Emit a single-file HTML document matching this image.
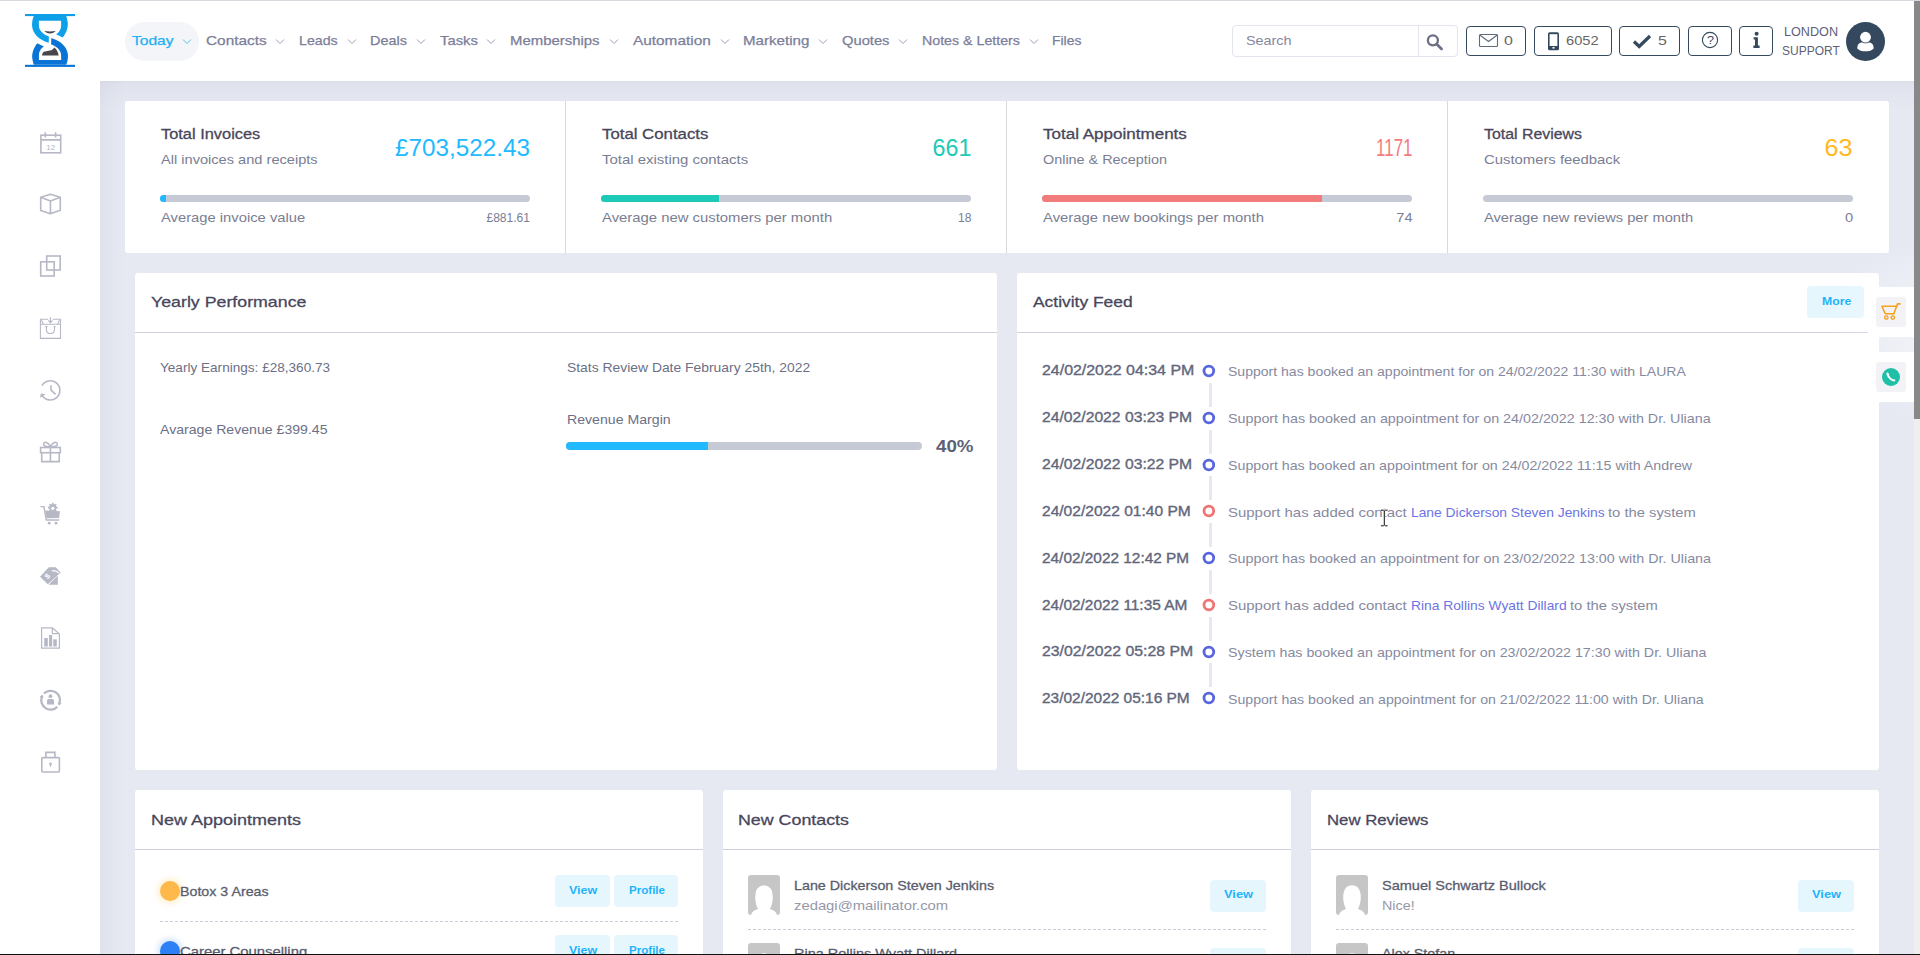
<!DOCTYPE html>
<html><head><meta charset="utf-8"><title>Dashboard</title>
<style>
html,body{margin:0;padding:0;width:1920px;height:955px;overflow:hidden;background:#fff;font-family:"Liberation Sans",sans-serif;}
body{position:relative;}
a{color:inherit;text-decoration:none}
</style></head><body>
<div style="position:absolute;left:0px;top:0px;width:1920px;height:1px;background:#d9dadf"></div>
<div style="position:absolute;left:100px;top:81px;width:1814px;height:873px;background:#e6e9f2"></div>
<div style="position:absolute;left:100px;top:81px;width:1814px;height:30px;background:linear-gradient(to bottom, rgba(30,40,90,0.055) 0, rgba(30,40,90,0.03) 3px, rgba(30,40,90,0.012) 20px, rgba(30,40,90,0) 30px)"></div>
<div style="position:absolute;left:100px;top:81px;width:30px;height:873px;background:linear-gradient(to right, rgba(30,40,90,0.03) 0, rgba(30,40,90,0) 25px)"></div>
<div style="position:absolute;left:1914px;top:1px;width:6px;height:953px;background:#efefef"></div>
<div style="position:absolute;left:1914px;top:1px;width:6px;height:418px;background:#888"></div>
<div style="position:absolute;left:0px;top:954px;width:1920px;height:1px;background:#111"></div>
<svg style="position:absolute;left:0;top:0" width="100" height="80" viewBox="0 0 100 80">
<rect x="25" y="14" width="50" height="2.1" fill="#0e9fe9"/>
<rect x="25" y="64.8" width="50" height="2.1" fill="#0a74d6"/>
<path d="M33.8 16 C32.3 19 31.7 24 32.2 27 C33 33 38 39.5 48.7 42.8 L48.9 36.4 C44 35 40 31.5 39 27 L38.8 20.7 L61.1 20.7 L61.1 25.7 C61 29.5 59 32.5 56.1 34.2 L62.7 37.6 C66.5 33 68.3 27 67.7 22.6 C67.4 20 66.8 18 66.2 16 Z" fill="#0e9fe9"/>
<path d="M33.8 16 C32.3 19 31.7 24 32.2 27 C33 33 38 39.5 48.7 42.8 L48.9 36.4 C44 35 40 31.5 39 27 L38.8 20.7 L61.1 20.7 L61.1 25.7 C61 29.5 59 32.5 56.1 34.2 L62.7 37.6 C66.5 33 68.3 27 67.7 22.6 C67.4 20 66.8 18 66.2 16 Z" fill="#0a74d6" transform="rotate(180 50 40.4)"/>
<path d="M44.2 31 Q50 31.8 55.8 31 Q53 33.6 50 33.6 Q47 33.6 44.2 31 Z" fill="#47474b"/>
<path d="M42 55.4 Q42.5 51.8 45.1 51.5 Q49 50.6 51.4 50.2 Q53.5 49.5 54.2 47.6 Q57.5 49.5 58.6 55.4 Z" fill="#47474b"/>
</svg>
<div style="position:absolute;left:125px;top:22px;width:74px;height:39px;background:#f4f5f9;border-radius:20px"></div>
<svg style="position:absolute;left:182.0px;top:38px" width="10" height="7" viewBox="0 0 10 7"><path d="M1 1.5 L5 5.5 L9 1.5" fill="none" stroke="#1fb0f5" stroke-width="0.9" opacity="0.85"/></svg>
<svg style="position:absolute;left:275.0px;top:38px" width="10" height="7" viewBox="0 0 10 7"><path d="M1 1.5 L5 5.5 L9 1.5" fill="none" stroke="#7b7e9a" stroke-width="0.9" opacity="0.85"/></svg>
<svg style="position:absolute;left:346.8px;top:38px" width="10" height="7" viewBox="0 0 10 7"><path d="M1 1.5 L5 5.5 L9 1.5" fill="none" stroke="#7b7e9a" stroke-width="0.9" opacity="0.85"/></svg>
<svg style="position:absolute;left:415.9px;top:38px" width="10" height="7" viewBox="0 0 10 7"><path d="M1 1.5 L5 5.5 L9 1.5" fill="none" stroke="#7b7e9a" stroke-width="0.9" opacity="0.85"/></svg>
<svg style="position:absolute;left:485.9px;top:38px" width="10" height="7" viewBox="0 0 10 7"><path d="M1 1.5 L5 5.5 L9 1.5" fill="none" stroke="#7b7e9a" stroke-width="0.9" opacity="0.85"/></svg>
<svg style="position:absolute;left:608.5px;top:38px" width="10" height="7" viewBox="0 0 10 7"><path d="M1 1.5 L5 5.5 L9 1.5" fill="none" stroke="#7b7e9a" stroke-width="0.9" opacity="0.85"/></svg>
<svg style="position:absolute;left:719.5px;top:38px" width="10" height="7" viewBox="0 0 10 7"><path d="M1 1.5 L5 5.5 L9 1.5" fill="none" stroke="#7b7e9a" stroke-width="0.9" opacity="0.85"/></svg>
<svg style="position:absolute;left:818.2px;top:38px" width="10" height="7" viewBox="0 0 10 7"><path d="M1 1.5 L5 5.5 L9 1.5" fill="none" stroke="#7b7e9a" stroke-width="0.9" opacity="0.85"/></svg>
<svg style="position:absolute;left:898.1px;top:38px" width="10" height="7" viewBox="0 0 10 7"><path d="M1 1.5 L5 5.5 L9 1.5" fill="none" stroke="#7b7e9a" stroke-width="0.9" opacity="0.85"/></svg>
<svg style="position:absolute;left:1029.0px;top:38px" width="10" height="7" viewBox="0 0 10 7"><path d="M1 1.5 L5 5.5 L9 1.5" fill="none" stroke="#7b7e9a" stroke-width="0.9" opacity="0.85"/></svg>
<div style="position:absolute;left:1232px;top:25px;width:224px;height:30px;border:1px solid #e2e5ee;border-radius:4px;background:#fff"></div>
<div style="position:absolute;left:1418px;top:26px;width:1px;height:30px;background:#e2e5ee"></div>
<svg style="position:absolute;left:1426px;top:33px" width="18" height="18" viewBox="0 0 18 18"><circle cx="6.9" cy="7.3" r="5" fill="none" stroke="#6b6f86" stroke-width="2.3"/><path d="M10.6 11 L15.6 16" stroke="#6b6f86" stroke-width="2.6" stroke-linecap="round"/></svg>
<div style="position:absolute;left:1466px;top:26px;width:60px;height:30px;border:1.5px solid #34495e;border-radius:4px;box-sizing:border-box;background:#fff"></div>
<div style="position:absolute;left:1534px;top:26px;width:78px;height:30px;border:1.5px solid #34495e;border-radius:4px;box-sizing:border-box;background:#fff"></div>
<div style="position:absolute;left:1619px;top:26px;width:61px;height:30px;border:1.5px solid #34495e;border-radius:4px;box-sizing:border-box;background:#fff"></div>
<div style="position:absolute;left:1688px;top:26px;width:44px;height:30px;border:1.5px solid #34495e;border-radius:4px;box-sizing:border-box;background:#fff"></div>
<div style="position:absolute;left:1739px;top:26px;width:34px;height:30px;border:1.5px solid #34495e;border-radius:4px;box-sizing:border-box;background:#fff"></div>
<svg style="position:absolute;left:1478px;top:33px" width="21" height="15" viewBox="0 0 21 15"><rect x="1.5" y="1.5" width="18" height="12" rx="1" fill="none" stroke="#5d6b7a" stroke-width="1.1"/><path d="M1.8 2 L10.5 8.5 L19.2 2" fill="none" stroke="#5d6b7a" stroke-width="1.1"/></svg>
<svg style="position:absolute;left:1547px;top:32px" width="13" height="19" viewBox="0 0 13 19"><rect x="1" y="0.3" width="11" height="18" rx="1.6" fill="#34495e"/><rect x="2.6" y="2.2" width="7.8" height="11.8" fill="#fff"/><rect x="5.5" y="15" width="2" height="1.6" fill="#fff"/></svg>
<svg style="position:absolute;left:1632px;top:34px" width="20" height="15" viewBox="0 0 20 15"><path d="M2 7.5 L7.2 12.5 L18 2" fill="none" stroke="#34495e" stroke-width="3.2" stroke-linejoin="miter"/></svg>
<svg style="position:absolute;left:1700px;top:31px" width="20" height="18" viewBox="0 0 20 18"><circle cx="10" cy="9" r="7.6" fill="none" stroke="#34495e" stroke-width="1.1"/></svg>
<svg style="position:absolute;left:1752px;top:31px" width="9" height="18" viewBox="0 0 9 18"><circle cx="4.6" cy="2.8" r="2" fill="#34495e"/><path d="M1.6 6.3 H5.9 V14.6 H7.6 V17 H1.4 V14.6 H3 V8.6 H1.6 Z" fill="#34495e"/></svg>
<div style="position:absolute;left:1846px;top:22px;width:39px;height:39px;background:#34495e;border-radius:50%"></div>
<svg style="position:absolute;left:1846px;top:22px" width="39" height="39" viewBox="0 0 39 39"><circle cx="19.5" cy="15.2" r="5.4" fill="#fff"/><path d="M11.3 26.5 C11.3 21.5 14 20.6 16 20.4 C17.5 21.4 21.5 21.4 23 20.4 C25 20.6 27.7 21.5 27.7 26.5 C26 28.5 23 29.3 19.5 29.3 C16 29.3 13 28.5 11.3 26.5 Z" fill="#fff"/></svg>
<svg style="position:absolute;left:36px;top:127px" width="30" height="30" viewBox="0 0 30 30"><rect x="4.9" y="8.2" width="19.8" height="17.6" fill="none" stroke="#b6b8c5" stroke-width="1.6"/><path d="M4.9 12.9 H24.7 M9.3 5.2 V10.6 M19.6 5.2 V10.6" stroke="#b6b8c5" stroke-width="1.6"/><text x="14.8" y="22.6" font-size="8" text-anchor="middle" fill="#b6b8c5" font-family="Liberation Sans">12</text></svg>
<svg style="position:absolute;left:36px;top:189px" width="30" height="30" viewBox="0 0 30 30"><path d="M14.45 5.2 L24.3 8.3 V21.2 L14.3 24.8 L4.7 21.4 V8.2 Z M4.7 8.2 L14.45 12.1 L24.3 8.3 M14.45 12.1 V24.6" fill="none" stroke="#b6b8c5" stroke-width="1.6" stroke-linejoin="round"/></svg>
<svg style="position:absolute;left:36px;top:251px" width="30" height="30" viewBox="0 0 30 30"><rect x="10.7" y="5" width="13.5" height="14" fill="none" stroke="#b6b8c5" stroke-width="1.6"/><rect x="4.7" y="10.8" width="13.5" height="14.2" fill="none" stroke="#b6b8c5" stroke-width="1.6"/></svg>
<svg style="position:absolute;left:36px;top:313px" width="30" height="30" viewBox="0 0 30 30"><path d="M12.2 6.3 H4.4 V25.4 H24.5 V6.3 H16.8 M4.4 11.3 H24.5 M14.45 4.2 V9.6 M12.4 7.5 L14.45 9.6 L16.5 7.5 M5.5 7.2 L7.2 10.8 M23.4 7.2 L21.7 10.8 M10.4 13.6 V16.5 Q10.4 20.5 14.45 20.5 Q18.5 20.5 18.5 16.5 V13.6 M9.3 13.6 H11.4 M17.5 13.6 H19.6" fill="none" stroke="#b6b8c5" stroke-width="1.1"/></svg>
<svg style="position:absolute;left:36px;top:375px" width="30" height="30" viewBox="0 0 30 30"><path d="M6 10.5 A9.6 9.6 0 1 1 6.2 20.6" fill="none" stroke="#b6b8c5" stroke-width="1.6"/><path d="M3.8 22.8 L5 18.3 L9.6 19.6 Z" fill="#b6b8c5"/><path d="M15 10.2 V15.2 L19.6 19.3" fill="none" stroke="#b6b8c5" stroke-width="1.6"/></svg>
<svg style="position:absolute;left:36px;top:437px" width="30" height="30" viewBox="0 0 30 30"><rect x="4.6" y="10.5" width="19.7" height="5.2" fill="none" stroke="#b6b8c5" stroke-width="1.6"/><path d="M5.7 15.7 V24.6 H23.2 V15.7 M14.45 10.5 V24.6" fill="none" stroke="#b6b8c5" stroke-width="1.6"/><path d="M14.45 9.6 C12 5 8.3 4.2 7.6 6.8 C7 8.8 9 9.8 14.45 9.6 C20 9.8 22 8.8 21.3 6.8 C20.6 4.2 17 5 14.45 9.6 Z" fill="none" stroke="#b6b8c5" stroke-width="1.5"/></svg>
<svg style="position:absolute;left:36px;top:499px" width="30" height="30" viewBox="0 0 30 30"><path d="M5 7.6 H7.9 L10.3 21 H22.6" fill="none" stroke="#b6b8c5" stroke-width="1.4" stroke-linecap="round"/><path d="M9.3 11.6 L24 12.2 L23 18.9 L10.5 19.2 Z" fill="#b6b8c5"/><circle cx="13.2" cy="24.2" r="1.4" fill="#b6b8c5"/><circle cx="20" cy="24.2" r="1.4" fill="#b6b8c5"/><circle cx="16.8" cy="8.6" r="3.6" fill="#b6b8c5"/><path d="M16.8 3.8 V13.4 M12 8.6 H21.6 M13.4 5.2 L20.2 12 M20.2 5.2 L13.4 12" stroke="#b6b8c5" stroke-width="1.6"/><circle cx="16.8" cy="9.3" r="1.6" fill="#fff"/></svg>
<svg style="position:absolute;left:36px;top:561px" width="30" height="30" viewBox="0 0 30 30"><path d="M4 15.8 L12.8 6.3 H19.8 L24.6 11.4 L11.8 23.2 Z" fill="#b6b8c5"/><path d="M12.6 23.8 L21.8 14.6 V23.8 Z" fill="#b6b8c5"/><path d="M15.8 9.8 Q19 9.2 22.8 11.8" fill="none" stroke="#fff" stroke-width="1.2"/><text x="11.7" y="17.8" font-size="7.5" font-weight="700" fill="#fff" font-family="Liberation Sans" transform="rotate(-45 11.7 15.5)" text-anchor="middle">$</text></svg>
<svg style="position:absolute;left:36px;top:623px" width="30" height="30" viewBox="0 0 30 30"><path d="M5.6 4.8 H16.3 L23.4 11 V25.2 H5.6 Z M16.3 4.8 V10.6 H23.4" fill="none" stroke="#b6b8c5" stroke-width="1.2" stroke-linejoin="round"/><rect x="8.2" y="15" width="3.6" height="8.5" fill="#b6b8c5"/><rect x="13" y="12" width="3.2" height="11.5" fill="#b6b8c5"/><rect x="17.3" y="16.3" width="3.5" height="7.2" fill="#b6b8c5"/></svg>
<svg style="position:absolute;left:36px;top:685px" width="30" height="30" viewBox="0 0 30 30"><path d="M7.95 8.55 A9.4 9.4 0 0 1 23.43 18.41" fill="none" stroke="#b6b8c5" stroke-width="2.2"/><path d="M21.25 21.85 A9.4 9.4 0 0 1 5.77 11.99" fill="none" stroke="#b6b8c5" stroke-width="2.2"/><path d="M6.52 9.6 L7.6 13.2 L3.6 11.7 Z" fill="#b6b8c5"/><path d="M22.68 20.8 L25.6 18.6 L21.6 17.2 Z" fill="#b6b8c5"/><circle cx="14.5" cy="11.2" r="1.9" fill="#b6b8c5"/><path d="M11 19.5 V15.5 Q11 14 12.5 14 H16.5 Q18 14 18 15.5 V19.5 Z" fill="#b6b8c5"/></svg>
<svg style="position:absolute;left:36px;top:747px" width="30" height="30" viewBox="0 0 30 30"><path d="M9.9 10.6 V5.4 H18.9 V10.6" fill="none" stroke="#b6b8c5" stroke-width="1.6"/><rect x="5.8" y="10.6" width="17.6" height="14.4" rx="1" fill="none" stroke="#b6b8c5" stroke-width="1.6"/><circle cx="14.5" cy="16.9" r="1.4" fill="#b6b8c5"/><path d="M14.5 17 V19.8" stroke="#b6b8c5" stroke-width="1.1"/></svg>
<div style="position:absolute;left:125px;top:101px;width:1764px;height:152px;background:#fff;border-radius:3px"></div>
<div style="position:absolute;left:565px;top:101px;width:1px;height:152px;background:#d9d9dc"></div>
<div style="position:absolute;left:1006px;top:101px;width:1px;height:152px;background:#d9d9dc"></div>
<div style="position:absolute;left:1447px;top:101px;width:1px;height:152px;background:#d9d9dc"></div>
<div style="position:absolute;left:160px;top:195px;width:370px;height:7px;background:#c6cad5;border-radius:4px;overflow:hidden"></div>
<div style="position:absolute;left:160px;top:195px;width:6px;height:7px;background:#22b9ff;border-radius:4px 0 0 4px"></div>
<div style="position:absolute;left:601px;top:195px;width:370px;height:7px;background:#c6cad5;border-radius:4px;overflow:hidden"></div>
<div style="position:absolute;left:601px;top:195px;width:117.5px;height:7px;background:#1dc9b7;border-radius:4px 0 0 4px"></div>
<div style="position:absolute;left:1042px;top:195px;width:370px;height:7px;background:#c6cad5;border-radius:4px;overflow:hidden"></div>
<div style="position:absolute;left:1042px;top:195px;width:280px;height:7px;background:#f27c7c;border-radius:4px 0 0 4px"></div>
<div style="position:absolute;left:1483px;top:195px;width:370px;height:7px;background:#c6cad5;border-radius:4px;overflow:hidden"></div>
<div style="position:absolute;left:135px;top:273px;width:862px;height:497px;background:#fff;border-radius:3px"></div>
<div style="position:absolute;left:135px;top:332px;width:862px;height:1px;background:#cdd1dd"></div>
<div style="position:absolute;left:566px;top:442px;width:356px;height:8px;background:#c6cad5;border-radius:4px"></div>
<div style="position:absolute;left:566px;top:442px;width:142px;height:8px;background:#22b9ff;border-radius:4px 0 0 4px"></div>
<div style="position:absolute;left:1017px;top:273px;width:862px;height:497px;background:#fff;border-radius:3px"></div>
<div style="position:absolute;left:1017px;top:332px;width:862px;height:1px;background:#cdd1dd"></div>
<div style="position:absolute;left:1807px;top:286px;width:57px;height:32px;background:#e5f6fd;border-radius:4px"></div>
<svg style="position:absolute;left:1200px;top:362.30px" width="18" height="18" viewBox="0 0 18 18"><circle cx="8.85" cy="9" r="4.85" fill="none" stroke="#5867dd" stroke-width="2.8"/></svg>
<div style="position:absolute;left:1209.3px;top:382.9px;width:2.6px;height:24px;background:#e6e8f3"></div>
<svg style="position:absolute;left:1200px;top:409.03px" width="18" height="18" viewBox="0 0 18 18"><circle cx="8.85" cy="9" r="4.85" fill="none" stroke="#5867dd" stroke-width="2.8"/></svg>
<div style="position:absolute;left:1209.3px;top:429.6px;width:2.6px;height:24px;background:#e6e8f3"></div>
<svg style="position:absolute;left:1200px;top:455.76px" width="18" height="18" viewBox="0 0 18 18"><circle cx="8.85" cy="9" r="4.85" fill="none" stroke="#5867dd" stroke-width="2.8"/></svg>
<div style="position:absolute;left:1209.3px;top:476.4px;width:2.6px;height:24px;background:#e6e8f3"></div>
<svg style="position:absolute;left:1200px;top:502.49px" width="18" height="18" viewBox="0 0 18 18"><circle cx="8.85" cy="9" r="4.85" fill="none" stroke="#f07474" stroke-width="2.8"/></svg>
<div style="position:absolute;left:1209.3px;top:523.1px;width:2.6px;height:24px;background:#e6e8f3"></div>
<svg style="position:absolute;left:1200px;top:549.22px" width="18" height="18" viewBox="0 0 18 18"><circle cx="8.85" cy="9" r="4.85" fill="none" stroke="#5867dd" stroke-width="2.8"/></svg>
<div style="position:absolute;left:1209.3px;top:569.8px;width:2.6px;height:24px;background:#e6e8f3"></div>
<svg style="position:absolute;left:1200px;top:595.95px" width="18" height="18" viewBox="0 0 18 18"><circle cx="8.85" cy="9" r="4.85" fill="none" stroke="#f07474" stroke-width="2.8"/></svg>
<div style="position:absolute;left:1209.3px;top:616.6px;width:2.6px;height:24px;background:#e6e8f3"></div>
<svg style="position:absolute;left:1200px;top:642.68px" width="18" height="18" viewBox="0 0 18 18"><circle cx="8.85" cy="9" r="4.85" fill="none" stroke="#5867dd" stroke-width="2.8"/></svg>
<div style="position:absolute;left:1209.3px;top:663.3px;width:2.6px;height:24px;background:#e6e8f3"></div>
<svg style="position:absolute;left:1200px;top:689.41px" width="18" height="18" viewBox="0 0 18 18"><circle cx="8.85" cy="9" r="4.85" fill="none" stroke="#5867dd" stroke-width="2.8"/></svg>
<div style="position:absolute;left:1800px;top:240px;width:150px;height:200px;background:radial-gradient(ellipse at 90% 45%, rgba(255,255,255,0.5) 0%, rgba(255,255,255,0) 60%)"></div>
<div style="position:absolute;left:1868px;top:287px;width:46px;height:50px;background:#fff;border-radius:4px 0 0 4px"></div>
<div style="position:absolute;left:1876px;top:297px;width:30px;height:30px;background:#f3f3f7;border-radius:3px"></div>
<svg style="position:absolute;left:1880px;top:302px" width="22" height="20" viewBox="0 0 22 20"><path d="M1.9 4.3 H16.6 L13.9 11.8 H5.2 Z" fill="none" stroke="#f7a21b" stroke-width="1.6" stroke-linejoin="round"/><path d="M16.4 4.6 L17.6 1.9 H20" fill="none" stroke="#f7a21b" stroke-width="1.6" stroke-linecap="round"/><circle cx="6.3" cy="15.6" r="1.7" fill="none" stroke="#f7a21b" stroke-width="1.4"/><circle cx="12.8" cy="15.6" r="1.7" fill="none" stroke="#f7a21b" stroke-width="1.4"/></svg>
<div style="position:absolute;left:1868px;top:352px;width:46px;height:50px;background:#fff;border-radius:4px 0 0 4px"></div>
<div style="position:absolute;left:1876px;top:362px;width:30px;height:30px;background:#f3f3f7;border-radius:3px"></div>
<svg style="position:absolute;left:1881px;top:366.5px" width="20" height="20" viewBox="0 0 20 20"><circle cx="10" cy="10" r="9" fill="#1fbfa8"/><path d="M6.2 5.2 C5.4 5.8 5.2 7 5.8 8.3 C6.8 10.6 8.8 12.8 11.3 14 C12.6 14.6 13.8 14.5 14.5 13.7 L13.2 12 C12.7 12.3 12.2 12.4 11.6 12.1 C10.2 11.3 8.9 10 8.1 8.5 C7.8 7.9 7.9 7.4 8.2 6.9 Z" fill="#fff"/></svg>
<div style="position:absolute;left:135px;top:790px;width:568px;height:180px;background:#fff;border-radius:3px"></div>
<div style="position:absolute;left:135px;top:849px;width:568px;height:1px;background:#cdd1dd"></div>
<div style="position:absolute;left:723px;top:790px;width:568px;height:180px;background:#fff;border-radius:3px"></div>
<div style="position:absolute;left:723px;top:849px;width:568px;height:1px;background:#cdd1dd"></div>
<div style="position:absolute;left:1311px;top:790px;width:568px;height:180px;background:#fff;border-radius:3px"></div>
<div style="position:absolute;left:1311px;top:849px;width:568px;height:1px;background:#cdd1dd"></div>
<div style="position:absolute;left:159.8px;top:881.3px;width:20px;height:20px;border-radius:50%;background:#ffb84a;box-shadow:0 0 6px 2px rgba(255,184,34,0.25)"></div>
<div style="position:absolute;left:555px;top:875px;width:55px;height:32px;background:#e5f7fd;border-radius:4px"></div>
<div style="position:absolute;left:614px;top:875px;width:64px;height:32px;background:#e5f7fd;border-radius:4px"></div>
<div style="position:absolute;left:160px;top:921px;width:518px;height:1px;background-image:linear-gradient(to right,#c6cbd6 0,#c6cbd6 3px,transparent 3px);background-size:5px 1px;background-repeat:repeat-x"></div>
<div style="position:absolute;left:159.8px;top:941px;width:20px;height:20px;border-radius:50%;background:#2c82f5;box-shadow:0 0 6px 2px rgba(44,130,245,0.25)"></div>
<div style="position:absolute;left:555px;top:935px;width:55px;height:32px;background:#e5f7fd;border-radius:4px"></div>
<div style="position:absolute;left:614px;top:935px;width:64px;height:32px;background:#e5f7fd;border-radius:4px"></div>
<svg style="position:absolute;left:748px;top:875px" width="32" height="40" viewBox="0 0 32 40"><rect width="32" height="40" rx="3" fill="#c6c6c6"/><path d="M3 40 Q4 35.5 10 34 Q7.8 30 7.3 25 Q6.3 10.8 16 10.3 Q25.7 10.8 24.7 25 Q24.2 30 22 34 Q28 35.5 29 40 Z" fill="#fff"/></svg>
<div style="position:absolute;left:1210px;top:880px;width:56px;height:32px;background:#e5f7fd;border-radius:4px"></div>
<div style="position:absolute;left:748px;top:929px;width:518px;height:1px;background-image:linear-gradient(to right,#c6cbd6 0,#c6cbd6 3px,transparent 3px);background-size:5px 1px;background-repeat:repeat-x"></div>
<svg style="position:absolute;left:748px;top:943px" width="32" height="40" viewBox="0 0 32 40"><rect width="32" height="40" rx="3" fill="#c6c6c6"/><path d="M3 40 Q4 35.5 10 34 Q7.8 30 7.3 25 Q6.3 10.8 16 10.3 Q25.7 10.8 24.7 25 Q24.2 30 22 34 Q28 35.5 29 40 Z" fill="#fff"/></svg>
<div style="position:absolute;left:1210px;top:948px;width:56px;height:32px;background:#e5f7fd;border-radius:4px"></div>
<svg style="position:absolute;left:1336px;top:875px" width="32" height="40" viewBox="0 0 32 40"><rect width="32" height="40" rx="3" fill="#c6c6c6"/><path d="M3 40 Q4 35.5 10 34 Q7.8 30 7.3 25 Q6.3 10.8 16 10.3 Q25.7 10.8 24.7 25 Q24.2 30 22 34 Q28 35.5 29 40 Z" fill="#fff"/></svg>
<div style="position:absolute;left:1798px;top:880px;width:56px;height:32px;background:#e5f7fd;border-radius:4px"></div>
<div style="position:absolute;left:1336px;top:929px;width:518px;height:1px;background-image:linear-gradient(to right,#c6cbd6 0,#c6cbd6 3px,transparent 3px);background-size:5px 1px;background-repeat:repeat-x"></div>
<svg style="position:absolute;left:1336px;top:943px" width="32" height="40" viewBox="0 0 32 40"><rect width="32" height="40" rx="3" fill="#c6c6c6"/><path d="M3 40 Q4 35.5 10 34 Q7.8 30 7.3 25 Q6.3 10.8 16 10.3 Q25.7 10.8 24.7 25 Q24.2 30 22 34 Q28 35.5 29 40 Z" fill="#fff"/></svg>
<div style="position:absolute;left:1798px;top:948px;width:56px;height:32px;background:#e5f7fd;border-radius:4px"></div>
<svg style="position:absolute;left:1380px;top:509px;z-index:6" width="9" height="18" viewBox="0 0 9 18"><path d="M1 1.2 H3.4 L4.3 2 L5.2 1.2 H7.6 M4.3 2 V16 M1 16.8 H3.4 L4.3 16 L5.2 16.8 H7.6" fill="none" stroke="#fff" stroke-width="2"/><path d="M1 1.2 H3.4 L4.3 2 L5.2 1.2 H7.6 M4.3 2 V16 M1 16.8 H3.4 L4.3 16 L5.2 16.8 H7.6" fill="none" stroke="#111" stroke-width="1"/></svg>
<div style="position:absolute;left:0;top:954px;width:1920px;height:1px;background:#111;z-index:5"></div>
<div style="position:absolute;left:1914px;top:1px;width:6px;height:953px;background:#efefef;z-index:5"></div>
<div style="position:absolute;left:1914px;top:1px;width:6px;height:418px;background:#888;z-index:5"></div>
<div style="position:absolute;top:34.1px;font-size:13px;line-height:13px;font-weight:400;color:#1fb0f5;white-space:nowrap;left:131.9px;transform-origin:0 0;transform:scaleX(1.1986);-webkit-text-stroke:0.25px currentColor;">Today</div>
<div style="position:absolute;top:34.1px;font-size:13px;line-height:13px;font-weight:400;color:#7b7e9a;white-space:nowrap;left:205.6px;transform-origin:0 0;transform:scaleX(1.1816);-webkit-text-stroke:0.25px currentColor;">Contacts</div>
<div style="position:absolute;top:34.1px;font-size:13px;line-height:13px;font-weight:400;color:#7b7e9a;white-space:nowrap;left:298.9px;transform-origin:0 0;transform:scaleX(1.0907);-webkit-text-stroke:0.25px currentColor;">Leads</div>
<div style="position:absolute;top:34.1px;font-size:13px;line-height:13px;font-weight:400;color:#7b7e9a;white-space:nowrap;left:370.3px;transform-origin:0 0;transform:scaleX(1.1084);-webkit-text-stroke:0.25px currentColor;">Deals</div>
<div style="position:absolute;top:34.1px;font-size:13px;line-height:13px;font-weight:400;color:#7b7e9a;white-space:nowrap;left:439.5px;transform-origin:0 0;transform:scaleX(1.1415);-webkit-text-stroke:0.25px currentColor;">Tasks</div>
<div style="position:absolute;top:34.1px;font-size:13px;line-height:13px;font-weight:400;color:#7b7e9a;white-space:nowrap;left:509.8px;transform-origin:0 0;transform:scaleX(1.1469);-webkit-text-stroke:0.25px currentColor;">Memberships</div>
<div style="position:absolute;top:34.1px;font-size:13px;line-height:13px;font-weight:400;color:#7b7e9a;white-space:nowrap;left:632.5px;transform-origin:0 0;transform:scaleX(1.1819);-webkit-text-stroke:0.25px currentColor;">Automation</div>
<div style="position:absolute;top:34.1px;font-size:13px;line-height:13px;font-weight:400;color:#7b7e9a;white-space:nowrap;left:743.3px;transform-origin:0 0;transform:scaleX(1.1617);-webkit-text-stroke:0.25px currentColor;">Marketing</div>
<div style="position:absolute;top:34.1px;font-size:13px;line-height:13px;font-weight:400;color:#7b7e9a;white-space:nowrap;left:841.7px;transform-origin:0 0;transform:scaleX(1.1325);-webkit-text-stroke:0.25px currentColor;">Quotes</div>
<div style="position:absolute;top:34.1px;font-size:13px;line-height:13px;font-weight:400;color:#7b7e9a;white-space:nowrap;left:921.7px;transform-origin:0 0;transform:scaleX(1.0929);-webkit-text-stroke:0.25px currentColor;">Notes &amp; Letters</div>
<div style="position:absolute;top:34.1px;font-size:13px;line-height:13px;font-weight:400;color:#7b7e9a;white-space:nowrap;left:1052px;transform-origin:0 0;transform:scaleX(1.0714);-webkit-text-stroke:0.25px currentColor;">Files</div>
<div style="position:absolute;top:34.2px;font-size:13px;line-height:13px;font-weight:400;color:#84879e;white-space:nowrap;left:1246.2px;transform-origin:0 0;transform:scaleX(1.1055);">Search</div>
<div style="position:absolute;top:33.79px;font-size:13.5px;line-height:13.5px;font-weight:400;color:#666;white-space:nowrap;left:1504.4px;transform-origin:0 0;transform:scaleX(1.1809);">0</div>
<div style="position:absolute;top:33.79px;font-size:13.5px;line-height:13.5px;font-weight:400;color:#666;white-space:nowrap;left:1566px;transform-origin:0 0;transform:scaleX(1.0874);">6052</div>
<div style="position:absolute;top:33.79px;font-size:13.5px;line-height:13.5px;font-weight:400;color:#666;white-space:nowrap;left:1658px;transform-origin:0 0;transform:scaleX(1.1809);">5</div>
<div style="position:absolute;top:34.88px;font-size:10.5px;line-height:10.5px;font-weight:400;color:#34495e;white-space:nowrap;left:1706.5px;transform-origin:0 0;transform:scaleX(1.1991);">?</div>
<div style="position:absolute;top:26.23px;font-size:12px;line-height:12px;font-weight:400;color:#5c5f78;white-space:nowrap;left:1783.5px;transform-origin:0 0;transform:scaleX(1.0519);">LONDON</div>
<div style="position:absolute;top:45.13px;font-size:12px;line-height:12px;font-weight:400;color:#5c5f78;white-space:nowrap;left:1781.6px;transform-origin:0 0;transform:scaleX(0.9994);">SUPPORT</div>
<div style="position:absolute;top:127.27px;font-size:14px;line-height:14px;font-weight:400;color:#48465b;white-space:nowrap;left:160.5px;transform-origin:0 0;transform:scaleX(1.1707);-webkit-text-stroke:0.28px currentColor;">Total Invoices</div>
<div style="position:absolute;top:152.95px;font-size:13px;line-height:13px;font-weight:400;color:#7a7e93;white-space:nowrap;left:160.5px;transform-origin:0 0;transform:scaleX(1.1233);">All invoices and receipts</div>
<div style="position:absolute;top:136.7px;font-size:23px;line-height:23px;font-weight:400;color:#22b9ff;white-space:nowrap;right:1390px;transform-origin:100% 0;transform:scaleX(1.0550);">&pound;703,522.43</div>
<div style="position:absolute;top:211.2px;font-size:13px;line-height:13px;font-weight:400;color:#7a7e93;white-space:nowrap;left:160.5px;transform-origin:0 0;transform:scaleX(1.1357);">Average invoice value</div>
<div style="position:absolute;top:211.2px;font-size:13px;line-height:13px;font-weight:400;color:#7a7e93;white-space:nowrap;right:1390px;transform-origin:100% 0;transform:scaleX(0.9269);">&pound;881.61</div>
<div style="position:absolute;top:127.27px;font-size:14px;line-height:14px;font-weight:400;color:#48465b;white-space:nowrap;left:601.5px;transform-origin:0 0;transform:scaleX(1.1986);-webkit-text-stroke:0.28px currentColor;">Total Contacts</div>
<div style="position:absolute;top:152.95px;font-size:13px;line-height:13px;font-weight:400;color:#7a7e93;white-space:nowrap;left:601.5px;transform-origin:0 0;transform:scaleX(1.1494);">Total existing contacts</div>
<div style="position:absolute;top:136.7px;font-size:23px;line-height:23px;font-weight:400;color:#1dc9b7;white-space:nowrap;right:949px;transform-origin:100% 0;transform:scaleX(1.0127);">661</div>
<div style="position:absolute;top:211.2px;font-size:13px;line-height:13px;font-weight:400;color:#7a7e93;white-space:nowrap;left:601.5px;transform-origin:0 0;transform:scaleX(1.1431);">Average new customers per month</div>
<div style="position:absolute;top:211.2px;font-size:13px;line-height:13px;font-weight:400;color:#7a7e93;white-space:nowrap;right:949px;transform-origin:100% 0;transform:scaleX(0.9308);">18</div>
<div style="position:absolute;top:127.27px;font-size:14px;line-height:14px;font-weight:400;color:#48465b;white-space:nowrap;left:1042.5px;transform-origin:0 0;transform:scaleX(1.2161);-webkit-text-stroke:0.28px currentColor;">Total Appointments</div>
<div style="position:absolute;top:152.95px;font-size:13px;line-height:13px;font-weight:400;color:#7a7e93;white-space:nowrap;left:1042.5px;transform-origin:0 0;transform:scaleX(1.1065);">Online &amp; Reception</div>
<div style="position:absolute;top:136.7px;font-size:23px;line-height:23px;font-weight:400;color:#f27c7c;white-space:nowrap;right:508px;transform-origin:100% 0;transform:scaleX(0.7349);">1171</div>
<div style="position:absolute;top:211.2px;font-size:13px;line-height:13px;font-weight:400;color:#7a7e93;white-space:nowrap;left:1042.5px;transform-origin:0 0;transform:scaleX(1.1423);">Average new bookings per month</div>
<div style="position:absolute;top:211.2px;font-size:13px;line-height:13px;font-weight:400;color:#7a7e93;white-space:nowrap;right:508px;transform-origin:100% 0;transform:scaleX(1.1170);">74</div>
<div style="position:absolute;top:127.27px;font-size:14px;line-height:14px;font-weight:400;color:#48465b;white-space:nowrap;left:1483.5px;transform-origin:0 0;transform:scaleX(1.1348);-webkit-text-stroke:0.28px currentColor;">Total Reviews</div>
<div style="position:absolute;top:152.95px;font-size:13px;line-height:13px;font-weight:400;color:#7a7e93;white-space:nowrap;left:1483.5px;transform-origin:0 0;transform:scaleX(1.1422);">Customers feedback</div>
<div style="position:absolute;top:136.7px;font-size:23px;line-height:23px;font-weight:400;color:#ffb822;white-space:nowrap;right:67px;transform-origin:100% 0;transform:scaleX(1.0946);">63</div>
<div style="position:absolute;top:211.2px;font-size:13px;line-height:13px;font-weight:400;color:#7a7e93;white-space:nowrap;left:1483.5px;transform-origin:0 0;transform:scaleX(1.1278);">Average new reviews per month</div>
<div style="position:absolute;top:211.2px;font-size:13px;line-height:13px;font-weight:400;color:#7a7e93;white-space:nowrap;right:67px;transform-origin:100% 0;transform:scaleX(1.1301);">0</div>
<div style="position:absolute;top:294.44px;font-size:15px;line-height:15px;font-weight:400;color:#48465b;white-space:nowrap;left:150.5px;transform-origin:0 0;transform:scaleX(1.1847);-webkit-text-stroke:0.28px currentColor;">Yearly Performance</div>
<div style="position:absolute;top:361.1px;font-size:13px;line-height:13px;font-weight:400;color:#6c7086;white-space:nowrap;left:160.4px;transform-origin:0 0;transform:scaleX(1.0443);">Yearly Earnings: &pound;28,360.73</div>
<div style="position:absolute;top:423.1px;font-size:13px;line-height:13px;font-weight:400;color:#6c7086;white-space:nowrap;left:160.4px;transform-origin:0 0;transform:scaleX(1.0847);">Avarage Revenue &pound;399.45</div>
<div style="position:absolute;top:361.2px;font-size:13px;line-height:13px;font-weight:400;color:#6c7086;white-space:nowrap;left:566.6px;transform-origin:0 0;transform:scaleX(1.0680);">Stats Review Date February 25th, 2022</div>
<div style="position:absolute;top:413.3px;font-size:13px;line-height:13px;font-weight:400;color:#6c7086;white-space:nowrap;left:566.6px;transform-origin:0 0;transform:scaleX(1.0864);">Revenue Margin</div>
<div style="position:absolute;top:437.78px;font-size:17px;line-height:17px;font-weight:700;color:#5d6176;white-space:nowrap;left:935.7px;transform-origin:0 0;transform:scaleX(1.1019);">40%</div>
<div style="position:absolute;top:294.44px;font-size:15px;line-height:15px;font-weight:400;color:#48465b;white-space:nowrap;left:1032.8px;transform-origin:0 0;transform:scaleX(1.1609);-webkit-text-stroke:0.28px currentColor;">Activity Feed</div>
<div style="position:absolute;top:296.35px;font-size:11.5px;line-height:11.5px;font-weight:700;color:#1fb3fb;white-space:nowrap;left:1821.8px;transform-origin:0 0;transform:scaleX(1.0616);">More</div>
<div style="position:absolute;top:362.34px;font-size:15px;line-height:15px;font-weight:400;color:#62667b;white-space:nowrap;left:1042.1px;transform-origin:0 0;transform:scaleX(1.0615);-webkit-text-stroke:0.38px currentColor;">24/02/2022 04:34 PM</div>
<div style="position:absolute;top:365.0px;font-size:13px;line-height:13px;font-weight:400;color:#868aa0;white-space:nowrap;left:1228.3px;transform-origin:0 0;transform:scaleX(1.0798);">Support has booked an appointment for on 24/02/2022 11:30 with LAURA</div>
<div style="position:absolute;top:409.18px;font-size:15px;line-height:15px;font-weight:400;color:#62667b;white-space:nowrap;left:1042.1px;transform-origin:0 0;transform:scaleX(1.0467);-webkit-text-stroke:0.38px currentColor;">24/02/2022 03:23 PM</div>
<div style="position:absolute;top:411.84px;font-size:13px;line-height:13px;font-weight:400;color:#868aa0;white-space:nowrap;left:1228.3px;transform-origin:0 0;transform:scaleX(1.1002);">Support has booked an appointment for on 24/02/2022 12:30 with Dr. Uliana</div>
<div style="position:absolute;top:456.02px;font-size:15px;line-height:15px;font-weight:400;color:#62667b;white-space:nowrap;left:1042.1px;transform-origin:0 0;transform:scaleX(1.0467);-webkit-text-stroke:0.38px currentColor;">24/02/2022 03:22 PM</div>
<div style="position:absolute;top:458.68px;font-size:13px;line-height:13px;font-weight:400;color:#868aa0;white-space:nowrap;left:1228.3px;transform-origin:0 0;transform:scaleX(1.0946);">Support has booked an appointment for on 24/02/2022 11:15 with Andrew</div>
<div style="position:absolute;top:502.86px;font-size:15px;line-height:15px;font-weight:400;color:#62667b;white-space:nowrap;left:1042.1px;transform-origin:0 0;transform:scaleX(1.0369);-webkit-text-stroke:0.38px currentColor;">24/02/2022 01:40 PM</div>
<div style="position:absolute;top:505.52px;font-size:13px;line-height:13px;font-weight:400;color:#868aa0;white-space:nowrap;left:1228.3px;transform-origin:0 0;transform:scaleX(1.1500);">Support has added contact</div>
<div style="position:absolute;top:505.52px;font-size:13px;line-height:13px;font-weight:400;color:#6d73e4;white-space:nowrap;left:1410.8px;transform-origin:0 0;transform:scaleX(1.0631);">Lane Dickerson Steven Jenkins</div>
<div style="position:absolute;top:505.52px;font-size:13px;line-height:13px;font-weight:400;color:#868aa0;white-space:nowrap;left:1608px;transform-origin:0 0;transform:scaleX(1.1367);">to the system</div>
<div style="position:absolute;top:549.7px;font-size:15px;line-height:15px;font-weight:400;color:#62667b;white-space:nowrap;left:1042.1px;transform-origin:0 0;transform:scaleX(1.0256);-webkit-text-stroke:0.38px currentColor;">24/02/2022 12:42 PM</div>
<div style="position:absolute;top:552.36px;font-size:13px;line-height:13px;font-weight:400;color:#868aa0;white-space:nowrap;left:1228.3px;transform-origin:0 0;transform:scaleX(1.1011);">Support has booked an appointment for on 23/02/2022 13:00 with Dr. Uliana</div>
<div style="position:absolute;top:596.54px;font-size:15px;line-height:15px;font-weight:400;color:#62667b;white-space:nowrap;left:1042.1px;transform-origin:0 0;transform:scaleX(1.0270);-webkit-text-stroke:0.38px currentColor;">24/02/2022 11:35 AM</div>
<div style="position:absolute;top:599.2px;font-size:13px;line-height:13px;font-weight:400;color:#868aa0;white-space:nowrap;left:1228.3px;transform-origin:0 0;transform:scaleX(1.1500);">Support has added contact</div>
<div style="position:absolute;top:599.2px;font-size:13px;line-height:13px;font-weight:400;color:#6d73e4;white-space:nowrap;left:1410.8px;transform-origin:0 0;transform:scaleX(1.0618);">Rina Rollins Wyatt Dillard</div>
<div style="position:absolute;top:599.2px;font-size:13px;line-height:13px;font-weight:400;color:#868aa0;white-space:nowrap;left:1570px;transform-origin:0 0;transform:scaleX(1.1367);">to the system</div>
<div style="position:absolute;top:643.38px;font-size:15px;line-height:15px;font-weight:400;color:#62667b;white-space:nowrap;left:1042.1px;transform-origin:0 0;transform:scaleX(1.0538);-webkit-text-stroke:0.38px currentColor;">23/02/2022 05:28 PM</div>
<div style="position:absolute;top:646.04px;font-size:13px;line-height:13px;font-weight:400;color:#868aa0;white-space:nowrap;left:1228.3px;transform-origin:0 0;transform:scaleX(1.0960);">System has booked an appointment for on 23/02/2022 17:30 with Dr. Uliana</div>
<div style="position:absolute;top:690.22px;font-size:15px;line-height:15px;font-weight:400;color:#62667b;white-space:nowrap;left:1042.1px;transform-origin:0 0;transform:scaleX(1.0299);-webkit-text-stroke:0.38px currentColor;">23/02/2022 05:16 PM</div>
<div style="position:absolute;top:692.88px;font-size:13px;line-height:13px;font-weight:400;color:#868aa0;white-space:nowrap;left:1228.3px;transform-origin:0 0;transform:scaleX(1.0868);">Support has booked an appointment for on 21/02/2022 11:00 with Dr. Uliana</div>
<div style="position:absolute;top:812.44px;font-size:15px;line-height:15px;font-weight:400;color:#48465b;white-space:nowrap;left:150.8px;transform-origin:0 0;transform:scaleX(1.1996);-webkit-text-stroke:0.28px currentColor;">New Appointments</div>
<div style="position:absolute;top:812.44px;font-size:15px;line-height:15px;font-weight:400;color:#48465b;white-space:nowrap;left:738px;transform-origin:0 0;transform:scaleX(1.1880);-webkit-text-stroke:0.28px currentColor;">New Contacts</div>
<div style="position:absolute;top:812.44px;font-size:15px;line-height:15px;font-weight:400;color:#48465b;white-space:nowrap;left:1326.5px;transform-origin:0 0;transform:scaleX(1.1164);-webkit-text-stroke:0.28px currentColor;">New Reviews</div>
<div style="position:absolute;top:885.1px;font-size:13px;line-height:13px;font-weight:400;color:#595d6e;white-space:nowrap;left:180px;transform-origin:0 0;transform:scaleX(1.0949);-webkit-text-stroke:0.28px currentColor;">Botox 3 Areas</div>
<div style="position:absolute;top:885.35px;font-size:11.5px;line-height:11.5px;font-weight:700;color:#1fb3fb;white-space:nowrap;left:569.1px;transform-origin:0 0;transform:scaleX(1.0845);">View</div>
<div style="position:absolute;top:885.35px;font-size:11.5px;line-height:11.5px;font-weight:700;color:#1fb3fb;white-space:nowrap;left:628.8px;transform-origin:0 0;transform:scaleX(1.0064);">Profile</div>
<div style="position:absolute;top:944.7px;font-size:13px;line-height:13px;font-weight:400;color:#595d6e;white-space:nowrap;left:180px;transform-origin:0 0;transform:scaleX(1.1429);-webkit-text-stroke:0.28px currentColor;">Career Counselling</div>
<div style="position:absolute;top:945.35px;font-size:11.5px;line-height:11.5px;font-weight:700;color:#1fb3fb;white-space:nowrap;left:569.1px;transform-origin:0 0;transform:scaleX(1.0845);">View</div>
<div style="position:absolute;top:945.35px;font-size:11.5px;line-height:11.5px;font-weight:700;color:#1fb3fb;white-space:nowrap;left:628.8px;transform-origin:0 0;transform:scaleX(1.0064);">Profile</div>
<div style="position:absolute;top:879.2px;font-size:13px;line-height:13px;font-weight:400;color:#595d6e;white-space:nowrap;left:793.9px;transform-origin:0 0;transform:scaleX(1.0990);-webkit-text-stroke:0.28px currentColor;">Lane Dickerson Steven Jenkins</div>
<div style="position:absolute;top:898.9px;font-size:13px;line-height:13px;font-weight:400;color:#9598a8;white-space:nowrap;left:793.9px;transform-origin:0 0;transform:scaleX(1.1393);">zedagi@mailinator.com</div>
<div style="position:absolute;top:889.45px;font-size:11.5px;line-height:11.5px;font-weight:700;color:#1fb3fb;white-space:nowrap;left:1224.1px;transform-origin:0 0;transform:scaleX(1.1164);">View</div>
<div style="position:absolute;top:947.2px;font-size:13px;line-height:13px;font-weight:400;color:#595d6e;white-space:nowrap;left:793.9px;transform-origin:0 0;transform:scaleX(1.1133);-webkit-text-stroke:0.28px currentColor;">Rina Rollins Wyatt Dillard</div>
<div style="position:absolute;top:879.2px;font-size:13px;line-height:13px;font-weight:400;color:#595d6e;white-space:nowrap;left:1381.7px;transform-origin:0 0;transform:scaleX(1.1172);-webkit-text-stroke:0.28px currentColor;">Samuel Schwartz Bullock</div>
<div style="position:absolute;top:898.9px;font-size:13px;line-height:13px;font-weight:400;color:#9598a8;white-space:nowrap;left:1381.7px;transform-origin:0 0;transform:scaleX(1.1020);">Nice!</div>
<div style="position:absolute;top:889.45px;font-size:11.5px;line-height:11.5px;font-weight:700;color:#1fb3fb;white-space:nowrap;left:1812.3px;transform-origin:0 0;transform:scaleX(1.1164);">View</div>
<div style="position:absolute;top:947.2px;font-size:13px;line-height:13px;font-weight:400;color:#595d6e;white-space:nowrap;left:1381.7px;transform-origin:0 0;transform:scaleX(1.0999);-webkit-text-stroke:0.28px currentColor;">Alex Stefan</div>
</body></html>
